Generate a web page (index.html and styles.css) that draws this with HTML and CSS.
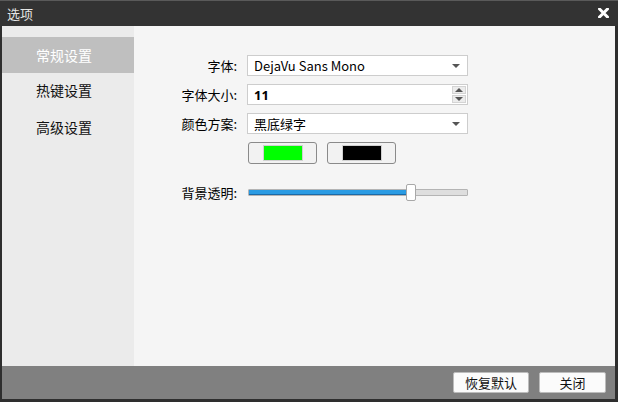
FILE: index.html
```html
<!DOCTYPE html>
<html lang="zh">
<head>
<meta charset="utf-8">
<title>选项</title>
<link rel="stylesheet" href="styles.css">
</head>
<body>
<div class="window">
  <div class="titlebar">
    <span class="title">选项</span>
    <svg class="close" width="11" height="10" viewBox="0 0 11 10"><path d="M1.5 1 L9.5 9 M9.5 1 L1.5 9" stroke="#fff" stroke-width="3" stroke-linecap="square"/></svg>
  </div>
  <div class="content">
    <div class="sidebar">
      <div class="nav-item active">常规设置</div>
      <div class="nav-item">热键设置</div>
      <div class="nav-item">高级设置</div>
    </div>
    <div class="main">
      <div class="form">
        <label class="label">字体:</label>
        <div class="field select"><span>DejaVu Sans Mono</span><i class="arrow"></i></div>
        <label class="label">字体大小:</label>
        <div class="field spin"><span class="num">11</span>
          <div class="spin-btns"><i class="up"></i><i class="down"></i></div>
        </div>
        <label class="label">颜色方案:</label>
        <div class="field select"><span>黑底绿字</span><i class="arrow"></i></div>
        <div></div>
        <div class="colors">
          <button class="color-btn"><span class="swatch green"></span></button>
          <button class="color-btn"><span class="swatch black"></span></button>
        </div>
        <label class="label slider-label">背景透明:</label>
        <div class="slider">
          <div class="track"><div class="fill"></div></div>
          <div class="handle"></div>
        </div>
      </div>
    </div>
  </div>
  <div class="footer">
    <button class="btn">恢复默认</button>
    <button class="btn">关闭</button>
  </div>
</div>
</body>
</html>
```
FILE: styles.css
```css
* { box-sizing: border-box; }
html, body { margin: 0; padding: 0; }
body {
  width: 618px;
  height: 402px;
  font-family: "Noto Sans CJK SC", "Noto Sans", sans-serif;
  font-size: 13px;
  color: #000;
}
.window {
  width: 618px;
  height: 402px;
  background: #2e2e2e;
  border-top: 1px solid #5a5a5a;
  display: flex;
  flex-direction: column;
}
.titlebar {
  height: 25px;
  background: #333333;
  display: flex;
  align-items: center;
  justify-content: space-between;
  padding: 0 9px 0 7px;
}
.title {
  color: #e6e6e6;
  font-size: 13px;
}
.close {
  display: block;
  margin-top: -1px;
}
.content {
  flex: 1;
  display: flex;
  margin: 0 3px 0 2px;
}
.sidebar {
  width: 132px;
  background: #ebebeb;
  padding-top: 11px;
}
.nav-item {
  height: 37px;
  display: flex;
  align-items: center;
  justify-content: center;
  font-size: 14px;
  color: #111;
  padding: 0 8px 3px 0;
}
.nav-item.active {
  height: 36px;
  background: #bfbfbf;
  color: #fff;
  padding-bottom: 1px;
}
.main {
  flex: 1;
  background: #f5f5f5;
  padding-top: 29px;
}
.form {
  display: grid;
  grid-template-columns: 103px 221px;
  column-gap: 10px;
  row-gap: 8px;
  align-items: center;
}
.label {
  text-align: right;
  font-size: 13px;
  color: #000;
}
.field {
  height: 21px;
  background: #fff;
  border: 1px solid #cdcdcd;
  display: flex;
  align-items: center;
  justify-content: space-between;
  padding: 0 6px 0 6px;
  font-size: 13px;
  color: #000;
}
.arrow {
  width: 0;
  height: 0;
  border-left: 4px solid transparent;
  border-right: 4px solid transparent;
  border-top: 4px solid #555;
  margin-right: 1px;
}
.spin { padding-right: 1px; }
.num { font-weight: bold; font-family: "Noto Sans", sans-serif; }
.spin-btns {
  display: flex;
  flex-direction: column;
  gap: 1px;
}
.spin-btns i {
  width: 14px;
  height: 8px;
  background: #ececec;
  border: 1px solid #d4d4d4;
  display: flex;
  align-items: center;
  justify-content: center;
}
.spin-btns .up::after {
  content: "";
  border-left: 4px solid transparent;
  border-right: 4px solid transparent;
  border-bottom: 4px solid #555;
}
.spin-btns .down::after {
  content: "";
  border-left: 4px solid transparent;
  border-right: 4px solid transparent;
  border-top: 4px solid #555;
}
.colors {
  display: flex;
  gap: 10px;
  padding-left: 1px;
}
.color-btn {
  width: 69px;
  height: 22px;
  border: 1px solid #8a8a8a;
  border-radius: 3px;
  background: #f2f2f2;
  display: flex;
  align-items: center;
  justify-content: center;
  padding: 0;
}
.swatch {
  width: 40px;
  height: 16px;
  border: 1px solid #d0d0d0;
}
.swatch.green { background: #00ff00; }
.swatch.black { background: #000; }
.slider-label { margin-top: 11px; }
.slider {
  margin-top: 11px;
  position: relative;
  height: 17px;
  display: flex;
  align-items: center;
  padding-left: 1px;
}
.track {
  width: 220px;
  height: 7px;
  background: #dedede;
  border: 1px solid #b4b4b4;
  border-radius: 1px;
  overflow: hidden;
}
.fill {
  width: 162px;
  height: 100%;
  background: #2a9be3;
  border-bottom: 1px solid #1a6aa8;
}
.handle {
  position: absolute;
  left: 159px;
  top: 0;
  width: 10px;
  height: 17px;
  background: #fff;
  border: 1px solid #a8a8a8;
  border-radius: 2px;
}
.footer {
  height: 33px;
  background: #808080;
  margin: 0 3px 3px 2px;
  display: flex;
  justify-content: flex-end;
  align-items: center;
  gap: 10px;
  padding: 0 9px 1px 0;
}
.btn {
  height: 21px;
  background: #fbfbfb;
  border: 1px solid #bcbcbc;
  border-radius: 2px;
  font-family: "Noto Sans CJK SC", sans-serif;
  font-size: 13px;
  color: #111;
  padding: 0;
}
.btn:first-child { width: 76px; }
.btn:last-child { width: 67px; }
```
